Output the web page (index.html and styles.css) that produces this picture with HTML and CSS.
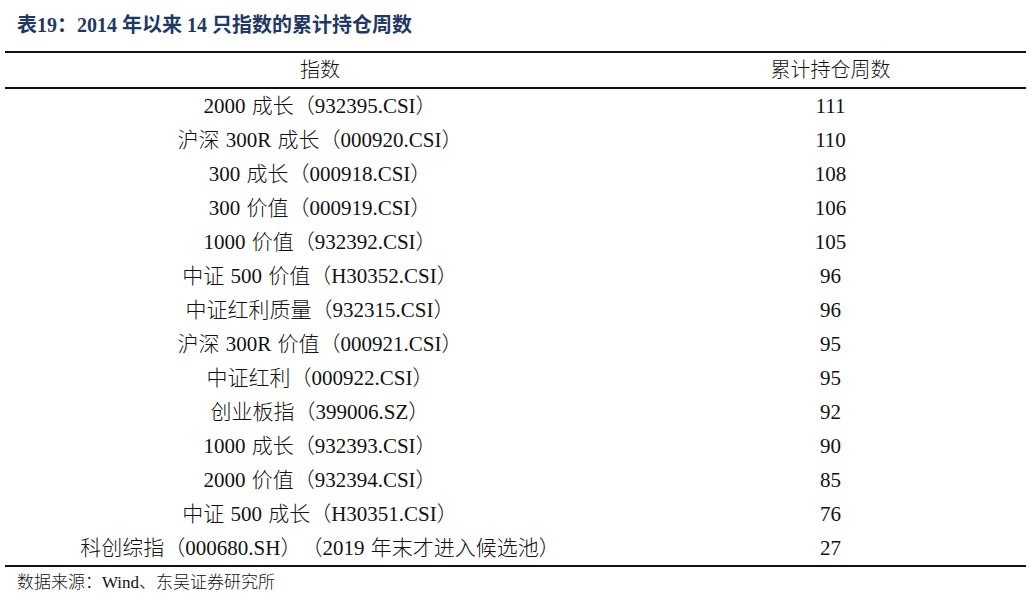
FILE: index.html
```html
<!DOCTYPE html>
<html lang="zh-CN">
<head>
<meta charset="utf-8">
<title>表19</title>
<link rel="stylesheet" href="styles.css">
</head>
<body>
<div class="page">
  <h1 class="caption">表19：2014 年以来 14 只指数的累计持仓周数</h1>
  <table class="data">
    <thead>
      <tr><th class="c1">指数</th><th class="c2">累计持仓周数</th></tr>
    </thead>
    <tbody>
      <tr><td>2000 成长（932395.CSI）</td><td>111</td></tr>
      <tr><td>沪深 300R 成长（000920.CSI）</td><td>110</td></tr>
      <tr><td>300 成长（000918.CSI）</td><td>108</td></tr>
      <tr><td>300 价值（000919.CSI）</td><td>106</td></tr>
      <tr><td>1000 价值（932392.CSI）</td><td>105</td></tr>
      <tr><td>中证 500 价值（H30352.CSI）</td><td>96</td></tr>
      <tr><td>中证红利质量（932315.CSI）</td><td>96</td></tr>
      <tr><td>沪深 300R 价值（000921.CSI）</td><td>95</td></tr>
      <tr><td>中证红利（000922.CSI）</td><td>95</td></tr>
      <tr><td>创业板指（399006.SZ）</td><td>92</td></tr>
      <tr><td>1000 成长（932393.CSI）</td><td>90</td></tr>
      <tr><td>2000 价值（932394.CSI）</td><td>85</td></tr>
      <tr><td>中证 500 成长（H30351.CSI）</td><td>76</td></tr>
      <tr><td>科创综指（000680.SH）（2019 年末才进入候选池）</td><td>27</td></tr>
    </tbody>
  </table>
  <p class="source">数据来源：Wind、东吴证券研究所</p>
</div>
</body>
</html>
```

FILE: styles.css
```css
html, body {
  margin: 0;
  padding: 0;
  background: #ffffff;
}

.page {
  width: 1031px;
  height: 604px;
  padding: 10px 5px 0 5px;
  box-sizing: border-box;
  font-family: "Liberation Serif", "Noto Sans CJK SC", serif;
  color: #111111;
  text-spacing-trim: space-all;
}

.caption {
  margin: 0 0 11px 0;
  padding-left: 12px;
  font-size: 20px;
  line-height: 30px;
  font-weight: bold;
  color: #1f3864;
}

.data {
  width: 1021px;
  border-collapse: collapse;
  border-top: 2px solid #111111;
  border-bottom: 2px solid #111111;
  font-size: 21px;
  font-weight: 300;
}

.data th,
.data td {
  padding: 0;
  height: 34px;
  line-height: 34px;
  text-align: center;
  font-weight: 300;
  white-space: nowrap;
  word-spacing: 1px;
}

.data th {
  font-size: 20px;
}

.data thead tr {
  border-bottom: 2px solid #111111;
}

.c1 {
  width: 630px;
}

.c2 {
  width: 391px;
}

.source {
  margin: 1px 0 0 0;
  padding-left: 12px;
  font-size: 17px;
  line-height: 30px;
  font-weight: 300;
}
```
